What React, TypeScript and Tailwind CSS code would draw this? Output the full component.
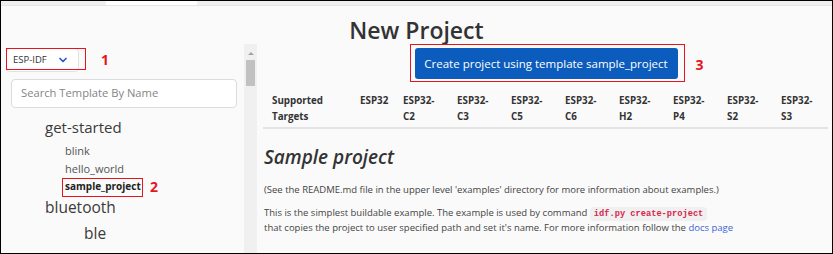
import { ChevronDown } from "lucide-react";

const TARGETS = [
  ["ESP32", ""],
  ["ESP32-", "C2"],
  ["ESP32-", "C3"],
  ["ESP32-", "C5"],
  ["ESP32-", "C6"],
  ["ESP32-", "H2"],
  ["ESP32-", "P4"],
  ["ESP32-", "S2"],
  ["ESP32-", "S3"],
];

function Sidebar() {
  return (
    <div className="flex w-[256px] shrink-0">
      <div className="relative flex w-[243px] flex-col">
        {/* Framework select */}
        <div className="ml-[5px] mt-[4px] flex h-[24px] w-[73px] items-center justify-between rounded-sm border border-[#e2e2e2] bg-white pl-[6px] pr-[9px] text-[9.5px] text-[#333]">
          <span>ESP-IDF</span>
          <ChevronDown className="h-3 w-3 text-[#2f55d4]" strokeWidth={3.5} />
        </div>
        <div className="absolute left-[5px] top-[4px] h-[22px] w-[80px] border border-[#e8141c]" />
        <span className="absolute left-[100px] top-[6px] text-[14px] font-bold leading-[20px] text-[#e8141c]">1</span>

        {/* Search */}
        <div className="ml-[10px] mt-[7px] flex h-[29px] w-[226px] items-center rounded-[4px] border border-[#dcdcdc] bg-white px-[9px] text-[11.2px] text-[#858585]">
          Search Template By Name
        </div>

        {/* Template tree */}
        <div className="mt-[7px] flex flex-col text-[#3a3a3a]">
          <div className="ml-[44px] h-[24px] text-[15px] leading-[24px]">get-started</div>
          <div className="ml-[64px] mt-[3px] h-[18px] text-[11px] leading-[18px] text-[#555]">blink</div>
          <div className="ml-[64px] h-[18px] text-[11px] leading-[18px] text-[#555]">hello_world</div>
          <div className="relative ml-[64px] h-[17px] text-[10px] font-bold leading-[17px] text-[#222]">
            sample_project
            <div className="absolute -left-[3px] top-0 h-[19px] w-[81px] border border-[#e8141c]" />
            <span className="absolute left-[85px] top-[-1px] text-[14px] font-bold leading-[20px] text-[#e8141c]">2</span>
          </div>
          <div className="ml-[44px] h-[24px] text-[15.5px] leading-[24px]">bluetooth</div>
          <div className="ml-[83px] mt-[2px] h-[24px] text-[15.5px] leading-[24px]">ble</div>
        </div>
      </div>

      {/* Scrollbar */}
      <div className="flex w-[13px] flex-col items-center bg-[#f0f0f0] pt-[8px]">
        <div className="h-0 w-0 border-x-[3px] border-b-[3px] border-x-transparent border-b-[#a3a3a3]" />
        <div className="mt-[5px] h-[26px] w-[9px] bg-[#c1c1c1]" />
      </div>
    </div>
  );
}

function Content() {
  return (
    <div className="flex flex-1 flex-col pl-[6px] pr-[8px]">
      <div className="flex justify-center">
        <div className="relative ml-[3px] rounded-none border border-[#e8141c] pb-[2px] pl-[4px] pr-[6px] pt-[3px]">
          <button className="block h-[31px] w-[263px] whitespace-nowrap rounded-[3px] bg-[#0b5cbc] text-[11.5px] text-white">
            Create project using template sample_project
          </button>
          <span className="absolute left-[285px] top-[10px] text-[14px] font-bold leading-[20px] text-[#e8141c]">3</span>
        </div>
      </div>

      {/* Supported targets */}
      <div className="mt-[11px] flex border-b-2 border-[#e3e3e3] pb-[2px] text-[9.8px] font-bold leading-[16px] text-[#333]">
        <div className="w-[90px] pl-[9px]">
          <div>Supported</div>
          <div>Targets</div>
        </div>
        {TARGETS.map(([a, b], i) => (
          <div key={a + b} className={`${i === 0 ? "w-[43px]" : "w-[54px]"} pl-[7px]`}>
            <div>{a}</div>
            <div>{b}</div>
          </div>
        ))}
      </div>

      {/* Readme */}
      <div className="pl-[1px] text-[#444]">
        <h2 className="mt-[15px] text-[19px] font-semibold italic leading-[26px] text-[#333]">Sample project</h2>
        <p className="mt-[12px] text-[9.5px] leading-[16px]">
          (See the README.md file in the upper level 'examples' directory for more information about examples.)
        </p>
        <p className="mt-[7px] text-[9.5px] leading-[15px]">
          This is the simplest buildable example. The example is used by command{" "}
          <code className="rounded-sm bg-[#f0f0f0] px-[4px] py-[2px] font-['Liberation_Mono',monospace] text-[8.7px] font-bold leading-[10px] text-[#d6264f]">
            idf.py create-project
          </code>
          <br />
          that copies the project to user specified path and set it's name. For more information follow the{" "}
          <span className="text-[#3a64d8]">docs page</span>
        </p>
      </div>
    </div>
  );
}

export default function App() {
  return (
    <div className="flex h-[254px] w-[833px] flex-col overflow-hidden border border-black bg-[#fafafa] font-['Open_Sans',sans-serif]">
      {/* Tab strip */}
      <div className="flex h-[5px] shrink-0 border-b border-[#e6e6e6] bg-[#efefef]">
        <div className="ml-[105px] w-[91px] bg-white" />
      </div>

      <div className="flex h-[38px] shrink-0 items-end justify-center">
        <h1 className="mb-[-2px] text-[23px] font-semibold leading-[32px] text-[#333]">New Project</h1>
      </div>

      <div className="flex flex-1">
        <Sidebar />
        <Content />
      </div>
    </div>
  );
}
